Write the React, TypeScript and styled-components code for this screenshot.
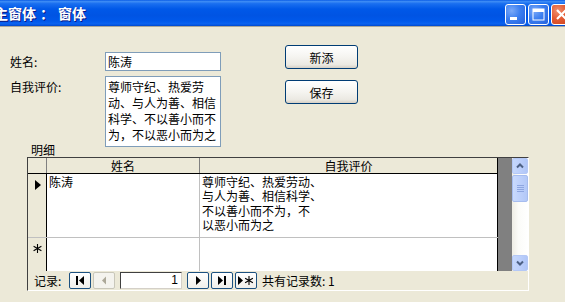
import React from "react";
import styled, { createGlobalStyle } from "styled-components";

const GlobalStyle = createGlobalStyle`
  html, body {
    margin: 0;
    padding: 0;
    background: #ece9d8;
  }
  body {
    font-family: "Noto Sans CJK SC", "DejaVu Sans", sans-serif;
    font-size: 12px;
    color: #000;
  }
`;

const evalText = ["尊师守纪、热爱劳", "动、与人为善、相信", "科学、不以善小而不", "为，不以恶小而为之"];
const rowText = ["尊师守纪、热爱劳动、", "与人为善、相信科学、", "不以善小而不为，不", "以恶小而为之"];

const MinIcon = () => (
  <svg width="21" height="21" viewBox="0 0 21 21">
    <rect x="5" y="13" width="7" height="3" fill="#fff" />
  </svg>
);

const MaxIcon = () => (
  <svg width="21" height="21" viewBox="0 0 21 21">
    <rect x="5" y="5" width="11" height="11" fill="none" stroke="#fff" strokeWidth="1" />
    <rect x="5" y="5" width="11" height="3" fill="#fff" />
  </svg>
);

const CloseIcon = () => (
  <svg width="21" height="21" viewBox="0 0 21 21">
    <path d="M6 6 L15 15 M15 6 L6 15" stroke="#fff" strokeWidth="2.2" />
  </svg>
);

const NavIcon = ({ kind }: { kind: "first" | "prev" | "next" | "last" | "new" }) => {
  const c = kind === "prev" ? "#aca899" : "#000";
  return (
    <svg width="20" height="15" viewBox="0 0 20 15">
      {kind === "first" && (
        <>
          <rect x="6" y="3" width="2" height="9" fill={c} />
          <path d="M14 3 L9 7.5 L14 12 Z" fill={c} />
        </>
      )}
      {kind === "prev" && <path d="M12 3.5 L8 7.5 L12 11.5 Z" fill={c} />}
      {kind === "next" && <path d="M8 3 L13 7.5 L8 12 Z" fill={c} />}
      {kind === "last" && (
        <>
          <path d="M6 3 L11 7.5 L6 12 Z" fill={c} />
          <rect x="12" y="3" width="2" height="9" fill={c} />
        </>
      )}
      {kind === "new" && (
        <>
          <path d="M2 3 L7 7.5 L2 12 Z" fill={c} />
          <path d="M13 3 V12 M9.1 5.2 L16.9 9.8 M9.1 9.8 L16.9 5.2" stroke={c} strokeWidth="1.1" />
        </>
      )}
    </svg>
  );
};

const App = () => {
  return (
    <Window>
      <GlobalStyle />
      <TitleBar>
        <TitleText>
          主窗体<Sep>：</Sep>窗体
        </TitleText>
        <CaptionButtons>
          <CaptionButton>
            <MinIcon />
          </CaptionButton>
          <CaptionButton>
            <MaxIcon />
          </CaptionButton>
          <CaptionButton $close>
            <CloseIcon />
          </CaptionButton>
        </CaptionButtons>
      </TitleBar>

      <Body>
        <TopArea>
          <Fields>
            <FieldRow>
              <Label>姓名:</Label>
              <TextBox>陈涛</TextBox>
            </FieldRow>
            <FieldRow $top>
              <Label $top>自我评价:</Label>
              <MemoBox>
                {evalText.map((l) => (
                  <div key={l}>{l}</div>
                ))}
              </MemoBox>
            </FieldRow>
          </Fields>
          <Buttons>
            <PushButton>新添</PushButton>
            <PushButton>保存</PushButton>
          </Buttons>
        </TopArea>

        <Caption>明细</Caption>

        <Sheet>
          <SheetMain>
            <Table>
              <Row $h={16} $header>
                <Selector $header />
                <HeadCell>姓名</HeadCell>
                <HeadCell $last>自我评价</HeadCell>
              </Row>
              <Row $h={64}>
                <Selector>
                  <svg width="8" height="12" viewBox="0 0 8 12">
                    <path d="M1 1 L7 6 L1 11 Z" fill="#000" />
                  </svg>
                </Selector>
                <Cell>陈涛</Cell>
                <Cell $last>
                  {rowText.map((l) => (
                    <div key={l}>{l}</div>
                  ))}
                </Cell>
              </Row>
              <Row $h={33} $noBorder>
                <Selector>
                  <svg width="11" height="11" viewBox="0 0 11 11">
                    <path d="M5.5 1 V10 M1.6 3.2 L9.4 7.8 M1.6 7.8 L9.4 3.2" stroke="#000" strokeWidth="1.1" />
                  </svg>
                </Selector>
                <Cell />
                <Cell $last />
              </Row>
            </Table>
            <GreyFill />
            <ScrollBar>
              <ScrollButton>
                <svg width="14" height="14" viewBox="0 0 14 14">
                  <path d="M4 8.5 L7 5.5 L10 8.5" fill="none" stroke="#4d6185" strokeWidth="2" />
                </svg>
              </ScrollButton>
              <Thumb>
                <Grip />
                <Grip />
                <Grip />
                <Grip />
              </Thumb>
              <Track />
              <ScrollButton>
                <svg width="14" height="14" viewBox="0 0 14 14">
                  <path d="M4 5.5 L7 8.5 L10 5.5" fill="none" stroke="#4d6185" strokeWidth="2" />
                </svg>
              </ScrollButton>
            </ScrollBar>
          </SheetMain>

          <NavBar>
            <NavLabel>记录:</NavLabel>
            <NavGroup>
              <NavButton>
                <NavIcon kind="first" />
              </NavButton>
              <NavButton $disabled>
                <NavIcon kind="prev" />
              </NavButton>
            </NavGroup>
            <RecordBox>1</RecordBox>
            <NavGroup>
              <NavButton>
                <NavIcon kind="next" />
              </NavButton>
              <NavButton>
                <NavIcon kind="last" />
              </NavButton>
              <NavButton>
                <NavIcon kind="new" />
              </NavButton>
            </NavGroup>
            <NavCount>共有记录数: 1</NavCount>
          </NavBar>
        </Sheet>
      </Body>
    </Window>
  );
};

const Window = styled.div`
  width: 565px;
  height: 302px;
  overflow: hidden;
  background: #ece9d8;
  display: flex;
  flex-direction: column;
`;

const TitleBar = styled.div`
  height: 26px;
  flex-shrink: 0;
  display: flex;
  align-items: center;
  justify-content: space-between;
  background: linear-gradient(
    to bottom,
    #0a5ce6 0%,
    #3d8cf5 6%,
    #1a6ff0 14%,
    #0058e8 35%,
    #0054e3 60%,
    #0058ea 80%,
    #0a62f0 92%,
    #0048cc 100%
  );
  border-bottom: 1px solid #a9a79c;
  overflow: hidden;
`;

const TitleText = styled.div`
  margin-left: -6px;
  font-size: 14px;
  font-weight: bold;
  color: #fff;
  white-space: nowrap;
  text-shadow: 1px 1px 0 #0a1883;
  line-height: 26px;
`;

const Sep = styled.span`
  display: inline-block;
  width: 22px;
  text-align: center;
`;

const CaptionButtons = styled.div`
  display: flex;
  gap: 2px;
  margin-right: -7px;
  align-self: flex-start;
  margin-top: 4px;
`;

const CaptionButton = styled.div<{ $close?: boolean }>`
  width: 21px;
  height: 21px;
  box-sizing: border-box;
  border: 1px solid #fff;
  border-radius: 3px;
  display: flex;
  align-items: center;
  justify-content: center;
  background: ${(p) =>
    p.$close
      ? "radial-gradient(circle at 30% 30%, #f09070 0%, #e35b33 45%, #c8401c 100%)"
      : "radial-gradient(circle at 30% 30%, #7aa9f8 0%, #3c7ff0 45%, #2460dc 100%)"};
  svg {
    margin: -1px;
  }
`;

const Body = styled.div`
  flex: 1;
  padding-top: 18px;
  display: flex;
  flex-direction: column;
`;

const TopArea = styled.div`
  height: 97px;
  display: flex;
`;

const Fields = styled.div`
  width: 285px;
  padding: 7px 0 0 10px;
  box-sizing: border-box;
  display: flex;
  flex-direction: column;
  gap: 5px;
`;

const FieldRow = styled.div<{ $top?: boolean }>`
  display: grid;
  grid-template-columns: 95px 116px;
  align-items: ${(p) => (p.$top ? "start" : "center")};
`;

const Label = styled.div<{ $top?: boolean }>`
  font-size: 12px;
  line-height: 16px;
  padding-top: ${(p) => (p.$top ? "3px" : "0")};
`;

const TextBox = styled.div`
  height: 19px;
  box-sizing: border-box;
  border: 1px solid #7f9db9;
  background: #fff;
  padding: 0 2px;
  font-size: 12px;
  line-height: 17px;
`;

const MemoBox = styled.div`
  height: 71px;
  box-sizing: border-box;
  border: 1px solid #7f9db9;
  background: #fff;
  padding: 2px 1px 0 2px;
  font-size: 12px;
  line-height: 16px;
  white-space: nowrap;
  overflow: hidden;
`;

const Buttons = styled.div`
  display: flex;
  flex-direction: column;
  gap: 11px;
`;

const PushButton = styled.div`
  width: 73px;
  height: 24px;
  box-sizing: border-box;
  border: 1px solid #003c74;
  border-radius: 3px;
  background: linear-gradient(to bottom, #ffffff 0%, #f5f4f0 50%, #ebe9e2 85%, #d6d0c5 100%);
  display: flex;
  align-items: center;
  justify-content: center;
  font-size: 12px;
`;

const Caption = styled.div`
  height: 15px;
  line-height: 15px;
  padding-left: 31px;
  font-size: 12px;
`;

const Sheet = styled.div`
  margin-left: 27px;
  width: 502px;
  height: 134px;
  box-sizing: border-box;
  border-top: 1px solid #404040;
  border-left: 1px solid #404040;
  border-right: 1px solid #fff;
  border-bottom: 1px solid #fff;
  display: flex;
  flex-direction: column;
`;

const SheetMain = styled.div`
  height: 113px;
  display: flex;
`;

const Table = styled.div`
  width: 470px;
  display: flex;
  flex-direction: column;
  background: #fff;
`;

const Row = styled.div<{ $h: number; $header?: boolean; $noBorder?: boolean }>`
  height: ${(p) => p.$h}px;
  box-sizing: border-box;
  display: grid;
  grid-template-columns: 19px 153px 298px;
  border-bottom: ${(p) => (p.$noBorder ? "none" : p.$header ? "1px solid #000" : "1px solid #c0c0c0")};
  background: ${(p) => (p.$header ? "#ece9d8" : "#fff")};
`;

const Selector = styled.div<{ $header?: boolean }>`
  box-sizing: border-box;
  background: #ece9d8;
  border-right: 1px solid ${(p) => (p.$header ? "#808080" : "#000")};
  display: flex;
  justify-content: center;
  align-items: flex-start;
  padding-top: 5px;
  padding-left: 1px;
`;

const HeadCell = styled.div<{ $last?: boolean }>`
  box-sizing: border-box;
  border-right: 1px solid ${(p) => (p.$last ? "#000" : "#808080")};
  text-align: center;
  font-size: 12px;
  line-height: 15px;
`;

const Cell = styled.div<{ $last?: boolean }>`
  box-sizing: border-box;
  border-right: 1px solid ${(p) => (p.$last ? "#000" : "#c0c0c0")};
  padding: 1px 0 0 2px;
  font-size: 12px;
  line-height: 14.3px;
  white-space: nowrap;
  overflow: hidden;
`;

const GreyFill = styled.div`
  width: 14px;
  background: #808080;
`;

const ScrollBar = styled.div`
  width: 16px;
  display: flex;
  flex-direction: column;
  background: linear-gradient(to right, #eeede5 0%, #fbfbf8 40%, #ffffff 100%);
`;

const ScrollButton = styled.div`
  height: 16px;
  box-sizing: border-box;
  border: 1px solid #b4c8f6;
  border-radius: 2px;
  background: linear-gradient(to right, #c5d7fb 0%, #bccffb 50%, #b0c6f7 100%);
  display: flex;
  align-items: center;
  justify-content: center;
  svg {
    margin: -1px;
  }
`;

const Thumb = styled.div`
  margin-top: 1px;
  height: 27px;
  box-sizing: border-box;
  border: 1px solid #a6bcee;
  border-radius: 2px;
  background: linear-gradient(to right, #c9dafc 0%, #bdd0fb 50%, #b3c8f7 100%);
  display: flex;
  flex-direction: column;
  align-items: center;
  justify-content: center;
  gap: 1px;
`;

const Grip = styled.div`
  width: 7px;
  height: 1px;
  background: #8ea6e0;
`;

const Track = styled.div`
  flex: 1;
`;

const NavBar = styled.div`
  flex: 1;
  background: #ece9d8;
  display: flex;
  align-items: center;
  padding-left: 6px;
  font-size: 12px;
`;

const NavLabel = styled.div`
  width: 35px;
  line-height: 16px;
`;

const NavGroup = styled.div`
  display: flex;
  gap: 2px;
`;

const NavButton = styled.div<{ $disabled?: boolean }>`
  width: 22px;
  height: 17px;
  box-sizing: border-box;
  border: 1px solid ${(p) => (p.$disabled ? "#c9c7ba" : "#1c5180")};
  border-radius: 2px;
  background: ${(p) => (p.$disabled ? "#f4f3ee" : "linear-gradient(to bottom, #ffffff, #f0efea)")};
  display: flex;
  align-items: center;
  justify-content: center;
  svg {
    margin: -1px;
  }
`;

const RecordBox = styled.div`
  margin: 0 5px;
  width: 62px;
  height: 17px;
  box-sizing: border-box;
  border-top: 1px solid #404040;
  border-left: 1px solid #404040;
  border-right: 1px solid #d4d0c8;
  border-bottom: 1px solid #d4d0c8;
  background: #fff;
  text-align: right;
  padding-right: 3px;
  font-family: "Liberation Sans", sans-serif;
  font-size: 12px;
  line-height: 15px;
`;

const NavCount = styled.div`
  margin-left: 5px;
  line-height: 16px;
`;

export default App;
